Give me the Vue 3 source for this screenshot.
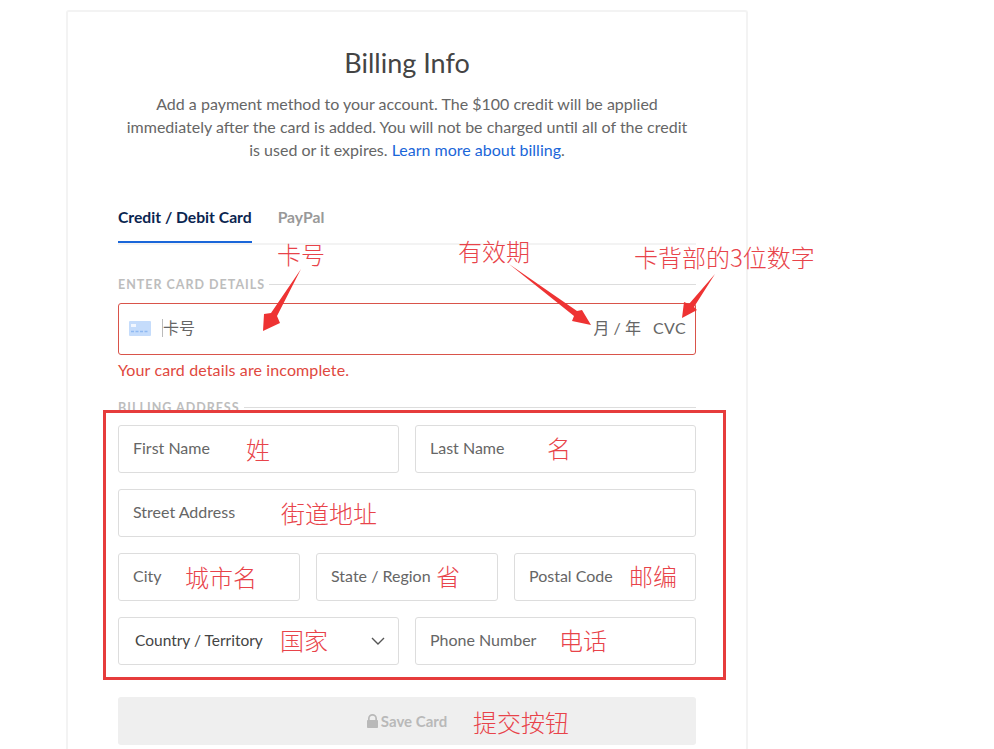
<script setup>
const notes = [
  { t: '卡号', x: 277, y: 239 },
  { t: '有效期', x: 458, y: 236 },
  { t: '卡背部的3位数字', x: 634, y: 242 },
  { t: '姓', x: 246, y: 434 },
  { t: '名', x: 547, y: 433 },
  { t: '街道地址', x: 281, y: 498 },
  { t: '城市名', x: 185, y: 562 },
  { t: '省', x: 436, y: 561 },
  { t: '邮编', x: 629, y: 561 },
  { t: '国家', x: 280, y: 625 },
  { t: '电话', x: 559, y: 625 },
  { t: '提交按钮', x: 473, y: 707 }
]
</script>

<template>
  <div class="page">
    <section class="card">
      <h1 class="title">Billing Info</h1>
      <p class="intro">
        Add a payment method to your account. The $100 credit will be applied<br />
        immediately after the card is added. You will not be charged until all of the credit<br />
        is used or it expires. <a class="link">Learn more about billing</a>.
      </p>

      <div class="tabs">
        <div class="tab active">Credit / Debit Card</div>
        <div class="tab">PayPal</div>
      </div>

      <div class="legend first"><span>ENTER CARD DETAILS</span></div>
      <div class="card-input">
        <svg class="card-icon" width="22" height="15" viewBox="0 0 22 15">
          <rect width="22" height="15" rx="1" fill="#c5dcfb" />
          <rect x="2" y="3" width="5" height="3" fill="#f2f7ff" />
          <path d="M2 10.500h18" stroke="#8fb9f2" stroke-width="1.500" stroke-dasharray="3 1.500" />
        </svg>
        <span class="caret"></span>
        <span class="ph">卡号</span>
        <span class="spacer"></span>
        <span class="ph">月 / 年</span>
        <span class="ph cvc">CVC</span>
      </div>
      <div class="error">Your card details are incomplete.</div>

      <div class="legend second"><span>BILLING ADDRESS</span></div>
      <div class="rows">
        <div class="row two">
          <div class="field">First Name</div>
          <div class="field">Last Name</div>
        </div>
        <div class="field">Street Address</div>
        <div class="row three">
          <div class="field">City</div>
          <div class="field">State / Region</div>
          <div class="field">Postal Code</div>
        </div>
        <div class="row two">
          <div class="field select">
            <span>Country / Territory</span>
            <svg class="chevron" width="14" height="8" viewBox="0 0 14 8">
              <path d="M1 1l6 6 6-6" fill="none" stroke="#555" stroke-width="1.400" />
            </svg>
          </div>
          <div class="field">Phone Number</div>
        </div>
      </div>

      <button class="save" type="button">
        <svg width="11" height="14" viewBox="0 0 11 14">
          <path d="M1 6V4.500a4.500 4.500 0 0 1 9 0V6h.2c.5 0 .8.300.8.800v6.400c0 .5-.3.800-.8.800H.8c-.5 0-.8-.3-.8-.8V6.800C0 6.300.3 6 .8 6zM2.700 6h5.600V4.500a2.800 2.800 0 0 0-5.600 0z" fill="#b9b9b9" />
        </svg>
        <span>Save Card</span>
      </button>
    </section>

    <div class="redbox"></div>
    <svg class="arrows" width="994" height="749" viewBox="0 0 994 749">
      <polygon points="301,269 277,316 280,323 263,331 264,314 271,313" fill="#ee3333" />
      <polygon points="509,264 577,311 582,310 591,325 572,321 574,316" fill="#ee3333" />
      <polygon points="715,274 694,307 697,310 682,318 684,302 689,304" fill="#ee3333" />
    </svg>
    <span v-for="n in notes" :key="n.t" class="note" :style="{ left: n.x + 'px', top: n.y + 'px' }">{{ n.t }}</span>
  </div>
</template>

<style>
html, body { margin: 0; background: #fff; overflow: hidden; }
</style>

<style scoped>
.page {
  position: relative;
  width: 994px;
  height: 749px;
  overflow: hidden;
  background: #fff;
  font-family: "Lato", "Noto Sans CJK SC", sans-serif;
}
.card {
  box-sizing: border-box;
  width: 682px;
  height: 780px;
  margin: 0 0 0 66px;
  position: relative;
  top: 10px;
  padding: 0 50px;
  border: 2px solid #f3f3f3;
  border-bottom: 0;
  border-radius: 3px 3px 0 0;
}
.title {
  margin: 0;
  padding-top: 33px;
  font-size: 27px;
  line-height: 36px;
  font-weight: 400;
  text-align: center;
  color: #444;
}
.intro {
  margin: 11px -10px 0;
  font-size: 16px;
  line-height: 23px;
  text-align: center;
  color: #666;
}
.link { color: #1a66d9; }
.tabs {
  display: flex;
  gap: 26px;
  margin-top: 39px;
  height: 43px;
  border-bottom: 2px solid #f3f3f3;
}
.tab {
  font-size: 15.700px;
  font-weight: 700;
  line-height: 34px;
  color: #999;
  margin-bottom: -2px;
}
.tab.active {
  color: #0a2550;
  border-bottom: 2px solid #1a66d9;
  height: 41px;
  box-sizing: content-box;
}
.legend {
  display: flex;
  align-items: center;
  gap: 4px;
  font-size: 12.500px;
  font-weight: 700;
  letter-spacing: 1px;
  color: #bdbdbd;
  line-height: 16px;
}
.legend::after {
  content: "";
  flex: 1;
  height: 1px;
  margin-top: -1px;
  background: #ddd;
}
.legend.first { margin-top: 32px; }
.legend.second { margin-top: 20px; }
.card-input {
  display: flex;
  align-items: center;
  box-sizing: border-box;
  height: 52px;
  margin-top: 10px;
  padding: 0 9px 2px 10px;
  border: 1px solid #d9534a;
  border-radius: 3px;
}
.card-icon { flex: none; margin-top: 1px; }
.caret {
  width: 1px;
  height: 18px;
  margin: 0 0 0 11px;
  background: #bbb;
}
.ph { font-size: 16px; line-height: 24px; color: #666; }
.cvc { margin-left: 12px; letter-spacing: 0.4px; }
.spacer { flex: 1; }
.error {
  margin-top: 5px;
  font-size: 16px;
  letter-spacing: 0.12px;
  line-height: 20px;
  color: #e0483e;
}
.rows {
  display: flex;
  flex-direction: column;
  gap: 16px;
  margin-top: 9px;
}
.row { display: grid; gap: 16px; }
.row.two { grid-template-columns: 1fr 1fr; }
.row.three { grid-template-columns: 1fr 1fr 1fr; }
.field {
  display: flex;
  align-items: center;
  box-sizing: border-box;
  height: 48px;
  padding: 0 14px 3px;
  border: 1px solid #ddd;
  border-radius: 3px;
  font-size: 16px;
  color: #666;
}
.field.select {
  justify-content: space-between;
  padding: 0 13px 2px 16px;
  color: #444;
  font-size: 15.500px;
}
.chevron { margin-top: 2px; }
.save {
  display: flex;
  align-items: center;
  justify-content: center;
  gap: 3px;
  width: 100%;
  height: 48px;
  margin-top: 32px;
  padding: 0;
  border: 0;
  border-radius: 3px;
  background: #efefef;
  font-family: inherit;
  font-size: 15px;
  font-weight: 700;
  color: #b9b9b9;
}
.redbox {
  position: absolute;
  left: 103px;
  top: 410px;
  box-sizing: border-box;
  width: 623px;
  height: 270px;
  border: 3px solid #e63c3c;
}
.arrows {
  position: absolute;
  left: 0;
  top: 0;
  pointer-events: none;
}
.note {
  position: absolute;
  font-family: "Noto Sans CJK SC", sans-serif;
  font-weight: 300;
  font-size: 24px;
  line-height: 30px;
  color: #e8434a;
  white-space: nowrap;
}
</style>
